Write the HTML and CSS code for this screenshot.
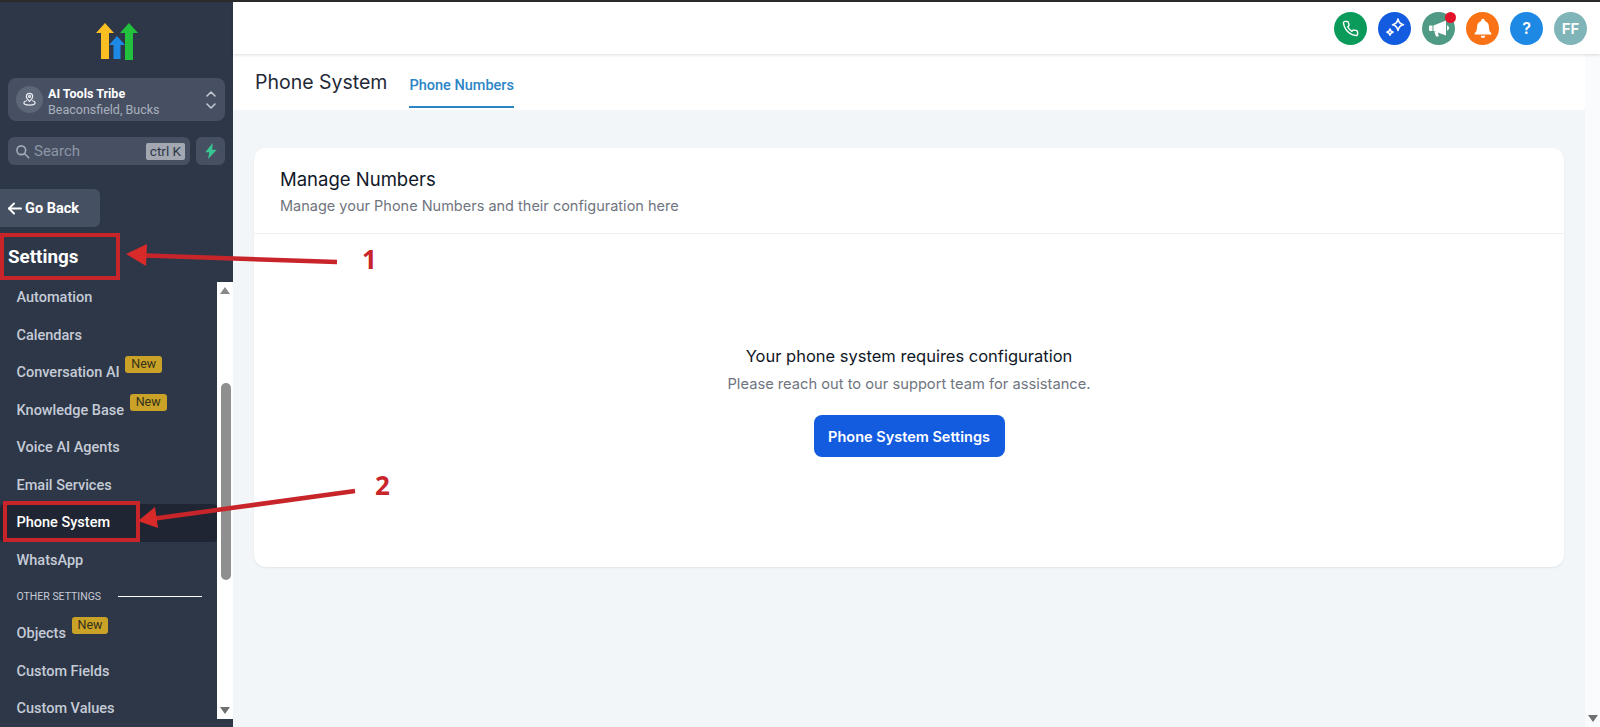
FILE: index.html
```html
<!DOCTYPE html>
<html lang="en">
<head>
    <meta charset="UTF-8">
    <meta name="viewport" content="width=device-width, initial-scale=1.0">
    <title>Phone System</title>
    <link rel="stylesheet" href="styles.css">
</head>
<body>

    <div class="app">
        <aside class="sidebar">
            <div class="logo">
                <svg width="44" height="42" viewBox="0 0 44 42">
                    <path d="M0 12 9 2l9 10h-5v26H5V12z" fill="#fbbf24"/>
                    <path d="M13 24l8-9 8 9h-4.500v14h-7V24z" fill="#1e88e5"/>
                    <path d="M24 12l9-10 9 10h-5v27h-8V12z" fill="#22c03c"/>
                </svg>
            </div>

            <div class="location">
                <span class="location-icon">
                    <svg width="15" height="17" viewBox="0 0 24 24" fill="none" stroke="#e8ebf0" stroke-width="2" stroke-linecap="round" stroke-linejoin="round">
                        <path d="M12 15c-3-3-5-5.300-5-8a5 5 0 0 1 10 0c0 2.700-2 5-5 8z"/>
                        <circle cx="12" cy="7" r="1.500"/>
                        <path d="M7 14c-2.500.6-4 1.800-4 3.300C3 19.400 7 21 12 21s9-1.600 9-3.700c0-1.500-1.500-2.700-4-3.300"/>
                    </svg>
                </span>
                <div class="location-text">
                    <div class="location-name">AI Tools Tribe</div>
                    <div class="location-sub">Beaconsfield, Bucks</div>
                </div>
                <svg class="location-chevrons" width="12" height="22" viewBox="0 0 12 22" fill="none" stroke="#c3c8d1" stroke-width="1.600" stroke-linecap="round" stroke-linejoin="round">
                    <path d="M2 7l4-4 4 4"/>
                    <path d="M2 15l4 4 4-4"/>
                </svg>
            </div>

            <div class="search-row">
                <div class="search">
                    <svg width="15" height="15" viewBox="0 0 24 24" fill="none" stroke="#a3abb8" stroke-width="2.500" stroke-linecap="round">
                        <circle cx="10" cy="10" r="7"/>
                        <path d="M15.500 15.500 22 22"/>
                    </svg>
                    <span class="search-label">Search</span>
                    <span class="search-key">ctrl K</span>
                </div>
                <div class="bolt">
                    <svg width="14" height="16" viewBox="0 0 12 14">
                        <path d="M7.500 0 1 8h3.500L3.500 14 11 6H7z" fill="#38c793"/>
                    </svg>
                </div>
            </div>

            <button class="go-back">
                <svg width="15" height="13" viewBox="0 0 15 13" fill="none" stroke="#fff" stroke-width="2" stroke-linecap="round" stroke-linejoin="round">
                    <path d="M14 6.500H2"/>
                    <path d="M7 1.500l-5 5 5 5"/>
                </svg>
                Go Back
            </button>

            <h2 class="settings-title">Settings</h2>

            <div class="nav-wrap">
                <nav class="nav">
                    <a class="nav-item">Automation</a>
                    <a class="nav-item">Calendars</a>
                    <a class="nav-item">Conversation AI <span class="badge">New</span></a>
                    <a class="nav-item">Knowledge Base <span class="badge">New</span></a>
                    <a class="nav-item">Voice AI Agents</a>
                    <a class="nav-item">Email Services</a>
                    <a class="nav-item active">Phone System</a>
                    <a class="nav-item">WhatsApp</a>
                    <div class="nav-section"><span>OTHER SETTINGS</span><i></i></div>
                    <a class="nav-item">Objects <span class="badge">New</span></a>
                    <a class="nav-item">Custom Fields</a>
                    <a class="nav-item">Custom Values</a>
                </nav>
                <div class="nav-scrollbar">
                    <span class="arrow-up"></span>
                    <div class="nav-track"><div class="nav-thumb"></div></div>
                    <span class="arrow-down"></span>
                </div>
            </div>
        </aside>

        <div class="main">
            <header class="topbar">
                <span class="circle green">
                    <svg width="17" height="17" viewBox="0 0 24 24" fill="none" stroke="#fff" stroke-width="2" stroke-linecap="round" stroke-linejoin="round">
                        <path d="M22 16.900v3a2 2 0 0 1-2.200 2 19.800 19.800 0 0 1-8.600-3.100 19.500 19.500 0 0 1-6-6A19.800 19.800 0 0 1 2.100 4.200 2 2 0 0 1 4.100 2h3a2 2 0 0 1 2 1.700c.1 1 .4 1.900.7 2.800a2 2 0 0 1-.5 2.100L8.100 9.900a16 16 0 0 0 6 6l1.300-1.300a2 2 0 0 1 2.100-.4c.9.300 1.800.6 2.800.7a2 2 0 0 1 1.700 2z"/>
                    </svg>
                </span>
                <span class="circle blue">
                    <svg width="24" height="24" viewBox="0 0 24 24" fill="none" stroke="#fff" stroke-width="1.600" stroke-linejoin="round">
                        <path d="M15 3c.7 3.600 2 5 5.500 5.700C17 9.400 15.700 10.800 15 14.400 14.300 10.800 13 9.400 9.500 8.700 13 8 14.300 6.600 15 3z"/>
                        <path d="M7 13c.4 2 1.100 2.700 3 3.100-1.900.4-2.600 1.100-3 3.100-.4-2-1.100-2.700-3-3.100 1.900-.4 2.600-1.100 3-3.100z"/>
                    </svg>
                </span>
                <span class="circle teal">
                    <svg width="24" height="24" viewBox="0 0 24 24" fill="#fff">
                        <path d="M3 9.500h2.500v5.500H3a1 1 0 0 1-1-1v-3.500a1 1 0 0 1 1-1z"/>
                        <path d="M6.500 9.500 19 4.500v15L6.500 15z"/>
                        <path d="M7.500 16h3.300l1 4.500H9z"/>
                        <path d="M20 9.500c1.300.3 2 1.300 2 2.500s-.7 2.200-2 2.500z"/>
                    </svg>
                    <span class="dot"></span>
                </span>
                <span class="circle orange">
                    <svg width="22" height="22" viewBox="0 0 24 24" fill="#fff">
                        <path d="M12 2a2 2 0 0 1 2 2v.4c3 .9 4.500 3.400 4.500 6.600 0 3.500.8 5 2.500 6.500V19H3v-1.500C4.700 16 5.500 14.500 5.500 11c0-3.200 1.500-5.700 4.500-6.600V4a2 2 0 0 1 2-2z"/>
                        <path d="M9.500 20.500h5a2.500 2.500 0 0 1-5 0z"/>
                    </svg>
                </span>
                <span class="circle sky">?</span>
                <span class="circle avatar">FF</span>
            </header>

            <div class="content-wrap">
                <div class="content">
                    <div class="subheader">
                        <h1 class="page-title">Phone System</h1>
                        <a class="tab">Phone Numbers</a>
                    </div>

                    <section class="card">
                        <div class="card-head">
                            <h3>Manage Numbers</h3>
                            <p>Manage your Phone Numbers and their configuration here</p>
                        </div>
                        <div class="card-body">
                            <h4>Your phone system requires configuration</h4>
                            <p>Please reach out to our support team for assistance.</p>
                            <button class="primary">Phone System Settings</button>
                        </div>
                    </section>
                </div>
                <div class="page-scrollbar"><span class="arrow-down"></span></div>
            </div>
        </div>
    </div>

    <!-- red notes drawn over the screenshot -->
    <svg class="notes" width="1600" height="727" viewBox="0 0 1600 727" fill="none">
        <rect x="2" y="235" width="116" height="43" stroke="#c8252b" stroke-width="4"/>
        <rect x="5" y="503" width="133" height="37" stroke="#c8252b" stroke-width="4"/>
        <path d="M337 262 146 255.500" stroke="#c8252b" stroke-width="4.500"/>
        <path d="M126 254 147 244 146 266z" fill="#d92a2a"/>
        <path d="M355 491 155 518.500" stroke="#c8252b" stroke-width="4.500"/>
        <path d="M138 521 155 507 158 528z" fill="#d92a2a"/>
    </svg>
    <span class="note-num one">1</span>
    <span class="note-num two">2</span>

</body>
</html>
```

FILE: styles.css
```css
* {
    margin: 0;
    padding: 0;
    box-sizing: border-box;
}

html, body {
    height: 100%;
    overflow: hidden;
}

body {
    font-family: 'Inter', 'Roboto', sans-serif;
    background-color: #fff;
    color: #111827;
}

.app {
    display: flex;
    height: 100vh;
    border-top: 2px solid #2b2b2b;
}

/* sidebar */

.sidebar {
    width: 233px;
    flex-shrink: 0;
    background-color: #2d3748;
    display: flex;
    flex-direction: column;
    font-family: 'Roboto', sans-serif;
    color: #fff;
}

.logo {
    display: flex;
    justify-content: center;
    height: 76px;
    padding-top: 19px;
    padding-left: 3px;
}

.location {
    margin: 0 8px;
    height: 43px;
    background-color: #475062;
    border-radius: 8px;
    display: flex;
    align-items: center;
    padding: 0 8px;
}

.location-icon {
    width: 27px;
    height: 27px;
    border-radius: 50%;
    background-color: #5d6677;
    display: flex;
    align-items: center;
    justify-content: center;
    flex-shrink: 0;
}

.location-text {
    margin-left: 5px;
    padding-top: 3px;
    flex: 1;
}

.location-name {
    font-size: 12.500px;
    font-weight: 700;
    line-height: 16px;
}

.location-sub {
    font-size: 12.500px;
    line-height: 15px;
    color: #a9b1be;
}

.search-row {
    display: flex;
    gap: 6px;
    margin: 16px 8px 0;
}

.search {
    width: 182px;
    height: 28px;
    background-color: #475062;
    border-radius: 6px;
    display: flex;
    align-items: center;
    padding: 0 5px 0 7px;
}

.search-label {
    margin-left: 4px;
    font-size: 15px;
    color: #8d96a5;
    flex: 1;
}

.search-key {
    background-color: #a2a7b1;
    color: #2d3748;
    font-size: 13.500px;
    line-height: 17px;
    padding: 0 4px;
    border-radius: 2px;
}

.bolt {
    width: 29px;
    height: 28px;
    background-color: #475062;
    border-radius: 6px;
    display: flex;
    align-items: center;
    justify-content: center;
}

.go-back {
    margin-top: 24px;
    width: 100px;
    height: 38px;
    background-color: #465063;
    border: none;
    border-radius: 0 6px 6px 0;
    color: #fff;
    font-family: inherit;
    font-size: 14.500px;
    font-weight: 700;
    display: flex;
    align-items: center;
    gap: 3px;
    padding-left: 7px;
}

.settings-title {
    font-size: 18.800px;
    font-weight: 700;
    line-height: 53px;
    height: 55px;
    padding-left: 8px;
    margin-top: 4px;
    margin-bottom: -4px;
}

.nav-wrap {
    display: flex;
    height: 437px;
    overflow: hidden;
}

.nav {
    width: 217px;
    margin-top: -3px;
    flex-shrink: 0;
}

.nav-item {
    display: block;
    height: 37.500px;
    line-height: 38px;
    padding-left: 16.500px;
    font-size: 14.500px;
    font-weight: 500;
    color: #c5cbd6;
    white-space: nowrap;
}

.nav-item.active {
    background-color: #1f2533;
    color: #fff;
    border-radius: 4px;
}

.badge {
    display: inline-block;
    background-color: #c9a227;
    color: #33301c;
    font-size: 12.500px;
    font-weight: 400;
    line-height: 16px;
    height: 17px;
    padding: 0 6px;
    border-radius: 3px;
    vertical-align: 9px;
    margin-left: 2px;
}

.nav-section {
    height: 36px;
    display: flex;
    align-items: center;
    padding-left: 16.500px;
    padding-bottom: 2px;
    font-size: 10.500px;
    color: #c5cbd6;
}

.nav-section i {
    display: block;
    width: 84px;
    height: 1px;
    background-color: #fff;
    margin-left: 17px;
}

.nav-scrollbar {
    width: 16px;
    background-color: #fff;
    display: flex;
    flex-direction: column;
    align-items: center;
}

.nav-track {
    flex: 1;
    width: 100%;
    padding-top: 84px;
    padding-left: 1px;
    display: flex;
    justify-content: center;
}

.nav-thumb {
    width: 10px;
    height: 197px;
    background-color: #8f8f8f;
    border-radius: 5px;
}

.arrow-up,
.arrow-down {
    display: block;
    width: 0;
    height: 0;
    border-left: 5px solid transparent;
    border-right: 5px solid transparent;
    margin: 5px 0;
}

.arrow-up {
    border-bottom: 7px solid #8a8a8a;
}

.arrow-down {
    border-top: 7px solid #6f6f6f;
}

/* main area */

.main {
    flex: 1;
    min-width: 0;
    display: flex;
    flex-direction: column;
}

.topbar {
    height: 52px;
    flex-shrink: 0;
    background-color: #fff;
    box-shadow: 0 1px 3px rgba(0, 0, 0, 0.14);
    display: flex;
    align-items: center;
    justify-content: flex-end;
    gap: 11px;
    padding-right: 13px;
    position: relative;
}

.circle {
    width: 33px;
    height: 33px;
    border-radius: 50%;
    display: flex;
    align-items: center;
    justify-content: center;
    color: #fff;
    font-size: 16px;
    font-weight: 600;
    position: relative;
}

.green { background-color: #0a9b5b; }
.blue { background-color: #135bdf; }
.teal { background-color: #4f9a85; }
.orange { background-color: #f97316; }
.sky { background-color: #1e88e5; }
.avatar { background-color: #7fb5b8; font-size: 15px; }

.dot {
    position: absolute;
    top: 0;
    right: -1px;
    width: 11px;
    height: 11px;
    border-radius: 50%;
    background-color: #e3132a;
}

.content-wrap {
    flex: 1;
    display: flex;
    min-height: 0;
}

.content {
    flex: 1;
    background-color: #f2f6f9;
    padding-bottom: 20px;
}

.subheader {
    height: 56px;
    background-color: #fff;
    display: flex;
    padding-left: 22px;
    gap: 22px;
}

.page-title {
    font-size: 19.500px;
    font-weight: 400;
    line-height: 56px;
    color: #1f2937;
}

.tab {
    height: 55px;
    line-height: 66px;
    font-family: 'Roboto', sans-serif;
    font-size: 14.500px;
    font-weight: 500;
    color: #2b85c7;
    border-bottom: 2px solid #2b85c7;
    margin-top: -1px;
}

.card {
    margin: 38px 21px 0 21px;
    height: 419px;
    background-color: #fff;
    border-radius: 12px;
    box-shadow: 0 1px 2px rgba(16, 24, 40, 0.08);
}

.card-head {
    height: 86px;
    padding: 20px 25px 0 26px;
    border-bottom: 1px solid #eef0f3;
}

.card-head h3 {
    font-size: 18.500px;
    font-weight: 400;
    line-height: 22px;
    color: #101828;
}

.card-head p {
    font-size: 14.500px;
    line-height: 20px;
    margin-top: 6px;
    color: #6f7580;
}

.card-body {
    display: flex;
    flex-direction: column;
    align-items: center;
    padding-top: 110px;
}

.card-body h4 {
    font-size: 16.500px;
    font-weight: 400;
    line-height: 24px;
    color: #101828;
}

.card-body p {
    font-size: 14.700px;
    line-height: 20px;
    margin-top: 6px;
    color: #6f7580;
}

.primary {
    margin-top: 21px;
    width: 191px;
    height: 42px;
    background-color: #135bdf;
    border: none;
    border-radius: 8px;
    color: #fff;
    font-family: inherit;
    font-size: 14.500px;
    font-weight: 600;
}

.page-scrollbar {
    width: 15px;
    background-color: #fafbfc;
    display: flex;
    flex-direction: column;
    justify-content: flex-end;
    align-items: center;
}

/* notes over the screenshot */

.notes {
    position: absolute;
    top: 0;
    left: 0;
    pointer-events: none;
}

.note-num {
    position: absolute;
    font-family: 'Open Sans', sans-serif;
    font-size: 26px;
    font-weight: 700;
    line-height: 30px;
    color: #c8252b;
}

.note-num.one {
    left: 362px;
    top: 244px;
}

.note-num.two {
    left: 375px;
    top: 470px;
}
```
